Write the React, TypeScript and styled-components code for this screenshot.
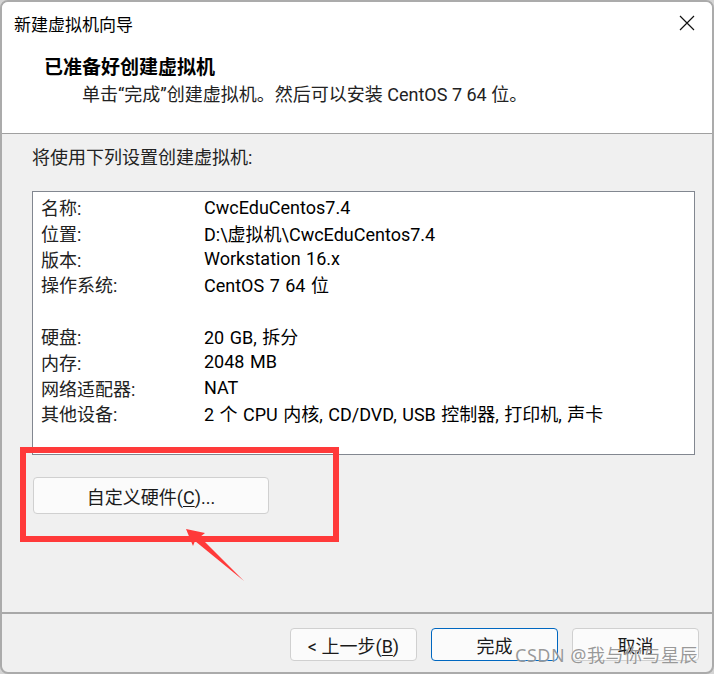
import React from "react";
import styled, { createGlobalStyle } from "styled-components";

const Global = createGlobalStyle`
  *, *::before, *::after { box-sizing: border-box; }
  html, body { margin: 0; padding: 0; background: #d4d4d4; }
  body { font-family: "Roboto", "Noto Sans CJK SC", sans-serif; }
`;

const Window = styled.div`
  position: relative;
  width: 714px;
  height: 674px;
  border: 2px solid #ababab;
  border-radius: 8px;
  overflow: hidden;
  display: flex;
  flex-direction: column;
  background: #f0f0f0;
  font-family: "Roboto", "Noto Sans CJK SC", sans-serif;
  color: #000;
`;

const Top = styled.div`
  background: #fff;
  height: 132px;
  flex-shrink: 0;
  border-bottom: 1px solid #a0a0a0;
  display: flex;
  flex-direction: column;
`;

const TitleBar = styled.div`
  height: 42px;
  display: flex;
  align-items: center;
  justify-content: space-between;
  padding: 0 17px 0 12px;
  font-size: 17px;
`;

const Close = styled.svg`
  width: 16px;
  height: 16px;
`;

const Heading = styled.div`
  margin: 9px 0 0 42px;
  font-size: 19px;
  font-weight: 700;
  line-height: 30px;
`;

const Sub = styled.div`
  margin: -2px 0 0 80px;
  font-size: 18px;
  line-height: 28px;
  color: #222;
`;

const Body = styled.div`
  flex: 1;
  padding: 12px 17px 0 30px;
  display: flex;
  flex-direction: column;
`;

const Intro = styled.div`
  font-size: 18px;
  line-height: 24px;
  color: #222;
`;

const InfoBox = styled.div`
  margin-top: 21px;
  height: 264px;
  border: 1px solid #828790;
  background: #fff;
  padding: 2px 8px 2px 8px;
`;

const Row = styled.div`
  display: grid;
  grid-template-columns: 163px 1fr;
  height: 25.8px;
  align-items: center;
  font-size: 18px;
  white-space: nowrap;
`;

const Label = styled.span`
  color: #222;
`;

const Value = styled.span`
  color: #000;
  word-spacing: 1px;
`;

const CustomButton = styled.button`
  margin: 22px 0 0 1px;
  width: 236px;
  height: 37px;
  border: 1px solid #d0d0d0;
  border-radius: 4px;
  background: #fbfbfb;
  font-family: inherit;
  font-size: 18px;
  color: #1a1a1a;
  padding: 0;
`;

const Footer = styled.div`
  height: 60px;
  flex-shrink: 0;
  border-top: 2px solid #a8a8a8;
  display: flex;
  justify-content: flex-end;
  align-items: flex-start;
  gap: 14px;
  padding: 14px 13px 0 0;
`;

const FootButton = styled.button<{ $primary?: boolean }>`
  width: 127px;
  height: 33px;
  border-radius: 4px;
  border: 1px solid ${(p) => (p.$primary ? "#0067c0" : "#d0d0d0")};
  background: #fbfbfb;
  font-family: inherit;
  font-size: 18px;
  color: #1a1a1a;
  padding: 0;
`;

const U = styled.span`
  text-decoration: underline;
  text-underline-offset: 2px;
`;

const Overlay = styled.svg`
  position: absolute;
  left: -2px;
  top: -2px;
  width: 714px;
  height: 674px;
  pointer-events: none;
`;

const Watermark = styled.div`
  position: absolute;
  right: 14px;
  bottom: 5px;
  font-family: "Noto Sans", "Noto Sans CJK SC", sans-serif;
  font-size: 18px;
  color: rgba(120, 120, 120, 0.75);
  text-shadow: 0 0 1px rgba(255, 255, 255, 0.9);
  letter-spacing: 0.5px;
`;

const rows: ([string, string] | null)[] = [
  ["名称:", "CwcEduCentos7.4"],
  ["位置:", "D:\\虚拟机\\CwcEduCentos7.4"],
  ["版本:", "Workstation 16.x"],
  ["操作系统:", "CentOS 7 64 位"],
  null,
  ["硬盘:", "20 GB, 拆分"],
  ["内存:", "2048 MB"],
  ["网络适配器:", "NAT"],
  ["其他设备:", "2 个 CPU 内核, CD/DVD, USB 控制器, 打印机, 声卡"],
];

export default function App() {
  return (
    <>
      <Global />
      <Window>
        <Top>
          <TitleBar>
            <span>新建虚拟机向导</span>
            <Close viewBox="0 0 16 16">
              <path d="M1 1 L15 15 M15 1 L1 15" stroke="#111" strokeWidth="1.2" fill="none" />
            </Close>
          </TitleBar>
          <Heading>已准备好创建虚拟机</Heading>
          <Sub>单击“完成”创建虚拟机。然后可以安装 CentOS 7 64 位。</Sub>
        </Top>
        <Body>
          <Intro>将使用下列设置创建虚拟机:</Intro>
          <InfoBox>
            {rows.map((r, i) =>
              r ? (
                <Row key={i}>
                  <Label>{r[0]}</Label>
                  <Value>{r[1]}</Value>
                </Row>
              ) : (
                <Row key={i} />
              )
            )}
          </InfoBox>
          <div>
            <CustomButton>
              自定义硬件(<U>C</U>)...
            </CustomButton>
          </div>
        </Body>
        <Footer>
          <FootButton>
            &lt; 上一步(<U>B</U>)
          </FootButton>
          <FootButton $primary>完成</FootButton>
          <FootButton>取消</FootButton>
        </Footer>
        <Overlay viewBox="0 0 714 674">
          <rect x="23" y="450" width="313" height="89" fill="none" stroke="#ff3a3a" strokeWidth="6" />
          <polygon points="186,529 205,533 200,537 244,581 195,541 193,546" fill="#ff3a3a" />
        </Overlay>
        <Watermark>CSDN @我与你与星辰</Watermark>
      </Window>
    </>
  );
}
